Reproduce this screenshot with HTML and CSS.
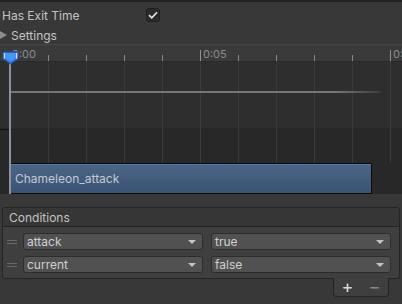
FILE: index.html
```html
<!DOCTYPE html>
<html>
<head>
<meta charset="utf-8">
<link rel="stylesheet" href="styles.css">
</head>
<body>
<div class="topline"></div>
<div class="row exit-row">
  <span class="label">Has Exit Time</span>
  <span class="checkbox">
    <svg width="10" height="8" viewBox="0 0 10 8"><path d="M1 4.2 L3.8 6.8 L9 1.2" fill="none" stroke="#e8e8e8" stroke-width="1.6"/></svg>
  </span>
</div>
<div class="row settings-row">
  <span class="tri"></span>
  <span class="label">Settings</span>
</div>

<div class="timeline">
  <div class="ruler">
    <span class="time t0">0:00</span>
    <span class="time t5">0:05</span>
    <span class="time t10">0:10</span>
  </div>
  <div class="track"></div>
  <div class="lower">
    <div class="clip">Chameleon_attack</div>
  </div>

  <div class="grid">
    <span class="gl minor" style="left:48px"></span>
    <span class="gl minor" style="left:86px"></span>
    <span class="gl minor" style="left:124px"></span>
    <span class="gl minor" style="left:162px"></span>
    <span class="gl major" style="left:200px"></span>
    <span class="gl minor" style="left:238px"></span>
    <span class="gl minor" style="left:276px"></span>
    <span class="gl minor" style="left:314px"></span>
    <span class="gl minor" style="left:352px"></span>
    <span class="gl major" style="left:390px"></span>
  </div>
  <div class="curve"></div>
  <div class="blackmark"></div>
  <div class="playline"></div>
  <svg class="playhead" width="17" height="14" viewBox="0 0 17 14">
    <path d="M1 1 H16 V8 L8.5 13 L1 8 Z" fill="#2f7be0" stroke="#1b4f9c" stroke-width="1"/>
    <path d="M2.5 2 V7.6" stroke="#cfe2ff" stroke-width="1.4"/>
    <path d="M14.5 2 V7.6" stroke="#cfe2ff" stroke-width="1.4"/>
    <path d="M4 2 H13 V7.5 L8.5 10.5 L4 7.5 Z" fill="#4796f4"/>
  </svg>
</div>

<div class="conditions">
  <div class="cond-head">Conditions</div>
  <div class="cond-body">
    <div class="cond-row">
      <span class="handle"></span>
      <div class="dropdown">attack<span class="arrow"></span></div>
      <div class="dropdown">true<span class="arrow"></span></div>
    </div>
    <div class="cond-row">
      <span class="handle"></span>
      <div class="dropdown">current<span class="arrow"></span></div>
      <div class="dropdown">false<span class="arrow"></span></div>
    </div>
  </div>
</div>
<div class="footer">
  <span class="plus">+</span>
  <span class="minus">−</span>
</div>
</body>
</html>
```

FILE: styles.css
```css
html, body {
  margin: 0;
  padding: 0;
}
body {
  width: 402px;
  height: 304px;
  overflow: hidden;
  background: #383838;
  font-family: Inter, "Noto Sans", sans-serif;
  font-size: 12px;
  color: #c4c4c4;
}
.topline {
  height: 2px;
  background: #232323;
}
.row {
  display: flex;
  align-items: center;
  height: 20px;
}
.exit-row {
  margin-top: 3px;
  padding-left: 2px;
}
.exit-row .label {
  width: 144px;
}
.checkbox {
  width: 12px;
  height: 12px;
  border: 1px solid #1f1f1f;
  background: #2a2a2a;
  border-radius: 3px;
  display: flex;
  align-items: center;
  justify-content: center;
}
.tri {
  width: 0;
  height: 0;
  border-left: 7px solid #8c8c8c;
  border-top: 4px solid transparent;
  border-bottom: 4px solid transparent;
  margin-right: 4px;
}
.timeline {
  position: relative;
  margin-top: -1px;
  height: 150px;
  overflow: hidden;
}
.ruler {
  position: relative;
  box-sizing: border-box;
  height: 18px;
  background: #3a3a3a;
  border-top: 1px solid #474747;
  border-bottom: 1px solid #2a2a2a;
}
.time {
  position: absolute;
  top: 2px;
  font-size: 11px;
  color: #8c8c8c;
}
.t0 { left: 12px; }
.t5 { left: 203px; }
.t10 { left: 393px; }
.track {
  height: 66px;
  background: #2e2e2e;
}
.lower {
  height: 66px;
  background: #282828;
  display: flex;
  flex-direction: column;
  justify-content: flex-end;
}
.clip {
  position: relative;
  z-index: 2;
  margin-left: 10px;
  width: 356px;
  height: 29px;
  border: 1px solid #0b0b0b;
  background: linear-gradient(#4a6686, #3a5374);
  box-shadow: inset 0 1px 0 #5a7698;
  color: #c3c9d1;
  line-height: 30px;
  padding-left: 4px;
}
.grid {
  position: absolute;
  left: 0;
  top: 0;
  width: 402px;
  height: 119px;
}
.gl {
  position: absolute;
  top: 0;
  width: 1px;
  height: 119px;
  background: linear-gradient(to bottom, transparent 0, transparent 11px, #8a8a8a 11px, #8a8a8a 17px, #3a3a3a 17px, #3a3a3a 100%);
}
.gl.major {
  background: linear-gradient(to bottom, transparent 0, transparent 6px, #909090 6px, #909090 17px, #3c3c3c 17px, #3c3c3c 100%);
}
.curve {
  position: absolute;
  left: 10px;
  top: 47px;
  width: 370px;
  height: 2px;
  background: linear-gradient(to right, #8e8e8e 0, #8e8e8e 88%, rgba(142,142,142,0.2) 100%);
  transform: scaleY(0.75);
}
.blackmark {
  position: absolute;
  left: 0;
  top: 85px;
  width: 12px;
  height: 1px;
  background: #111;
}
.playline {
  position: absolute;
  z-index: 3;
  left: 9px;
  top: 17px;
  width: 2px;
  height: 133px;
  background: #8a93a5;
}
.playhead {
  position: absolute;
  z-index: 4;
  left: 2px;
  top: 7px;
}
.conditions {
  margin: 13px 2px 0 2px;
  border: 1px solid #242424;
  border-radius: 3px;
  background: #3f3f3f;
}
.cond-head {
  height: 18px;
  line-height: 20px;
  padding-left: 6px;
  background: #363636;
  border-bottom: 1px solid #242424;
  border-radius: 3px 3px 0 0;
}
.cond-body {
  display: flex;
  flex-direction: column;
  gap: 6px;
  padding: 6px 8px 5px 4px;
}
.cond-row {
  display: flex;
  align-items: center;
  height: 17px;
}
.handle {
  width: 10px;
  height: 2px;
  border-top: 1px solid #6a6a6a;
  border-bottom: 1px solid #6a6a6a;
  margin-right: 6px;
}
.dropdown {
  position: relative;
  width: 180px;
  box-sizing: border-box;
  height: 17px;
  border: 1px solid #2d2d2d;
  border-radius: 3px;
  background: #515151;
  padding-left: 3px;
  line-height: 15px;
  color: #d0d0d0;
}
.dropdown + .dropdown {
  margin-left: 8px;
}
.arrow {
  position: absolute;
  right: 6px;
  top: 6px;
  width: 0;
  height: 0;
  border-top: 4px solid #c4c4c4;
  border-left: 4px solid transparent;
  border-right: 4px solid transparent;
}
.footer {
  margin: -1px 13px 0 auto;
  width: 54px;
  height: 18px;
  border: 1px solid #242424;
  border-top: none;
  border-radius: 0 0 4px 4px;
  background: #3f3f3f;
  display: flex;
  align-items: center;
  justify-content: space-around;
  font-size: 18px;
  line-height: 18px;
}
.plus { color: #dadada; }
.minus { color: #8a8a8a; }
```
